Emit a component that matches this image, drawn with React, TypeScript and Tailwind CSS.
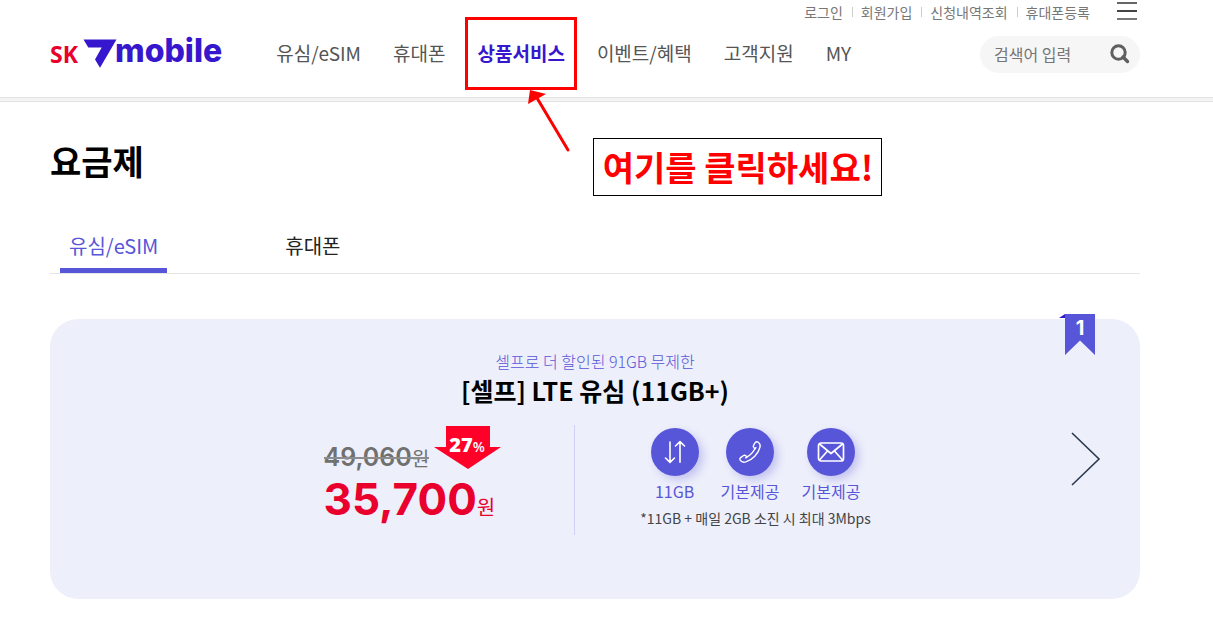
import React from "react";

const utilityLinks = ["로그인", "회원가입", "신청내역조회", "휴대폰등록"];
const menu = ["유심/eSIM", "휴대폰", "상품서비스", "이벤트/혜택", "고객지원", "MY"];

function Logo() {
  return (
    <a href="#home" aria-label="SK 7mobile" className="flex items-center whitespace-nowrap">
      <span className="font-['Open_Sans',sans-serif] text-[23px] leading-8 font-bold text-[#ea002c]">SK</span>
      <svg viewBox="0 0 34 30" className="ml-[5px] h-[30px] w-[34px]" aria-hidden="true">
        <path d="M0.5 0.5H33.5L17 28.8L12 20.5L18.7 8.5H5.3Z" fill="#3617ce" />
      </svg>
      <span className="-ml-0.5 pb-1.5 font-[Inter,sans-serif] text-[32px] leading-8 font-extrabold text-[#3617ce]">mobile</span>
    </a>
  );
}

function ClickGuide() {
  return (
    <>
      <span className="pointer-events-none absolute -inset-x-3 -top-[22px] h-[73px] border-3 border-[#ff0000]" />
      <svg
        viewBox="0 0 44 64"
        className="pointer-events-none absolute top-[50px] left-[50px] h-[64px] w-[44px]"
        aria-hidden="true"
      >
        <path d="M10 9L41 61" stroke="#ff0000" strokeWidth="3" strokeLinecap="round" />
        <path d="M3 1L19 5L1 15Z" fill="#ff0000" />
      </svg>
      <span className="pointer-events-none absolute top-[99px] left-[116px] flex h-[58px] w-[289px] items-center justify-center border border-black bg-white text-[34px] font-bold whitespace-nowrap text-[#ff0000]">
        여기를 클릭하세요!
      </span>
    </>
  );
}

function Header() {
  return (
    <header className="relative z-10 border-b border-[#e3e3e3] pr-[73px] pb-[13px] pl-[50px]">
      <div className="flex h-6 items-center justify-end">
        <ul className="flex items-center text-sm text-[#777]">
          {utilityLinks.map((label, i) => (
            <li key={label} className="flex items-center">
              {i > 0 && <span className="mr-2 ml-[9px] h-[10px] w-px bg-[#ccc]" />}
              <a href="#account">{label}</a>
            </li>
          ))}
        </ul>
        <button type="button" aria-label="전체메뉴" className="mr-[3px] ml-[27px] flex w-5 flex-col gap-1.5 pb-0.5">
          <span className="h-0.5 bg-[#666]" />
          <span className="h-0.5 bg-[#444]" />
          <span className="h-0.5 bg-[#777]" />
        </button>
      </div>
      <div className="flex h-[60px] items-center">
        <Logo />
        <nav className="ml-[54px] pb-0.5">
          <ul className="flex gap-8 text-[19px] leading-[28px] whitespace-nowrap text-[#555]">
            {menu.map((label) =>
              label === "상품서비스" ? (
                <li key={label} className="relative">
                  <a href="#products" className="font-bold text-[#3617ce]">{label}</a>
                  <ClickGuide />
                </li>
              ) : (
                <li key={label}>
                  <a href="#menu">{label}</a>
                </li>
              ),
            )}
          </ul>
        </nav>
        <form className="ml-auto flex h-[37px] w-40 items-center rounded-full bg-[#f6f6f6] pr-[10px] pl-[14px]">
          <input
            type="text"
            aria-label="검색어 입력"
            placeholder="검색어 입력"
            className="w-full min-w-0 flex-1 bg-transparent text-base outline-none placeholder:text-[#757575]"
          />
          <button type="button" aria-label="검색">
            <svg viewBox="0 0 20 20" className="h-5 w-5" fill="none" stroke="#5f5f5f" aria-hidden="true">
              <circle cx="8.5" cy="8.5" r="6.7" strokeWidth="3" />
              <path d="M13 13L17.5 17.5" strokeWidth="3.4" strokeLinecap="round" />
            </svg>
          </button>
        </form>
      </div>
    </header>
  );
}

function DataIcon() {
  return (
    <svg viewBox="0 0 24 24" className="h-6 w-6" fill="none" stroke="#fff" strokeWidth="1.6" strokeLinecap="round" strokeLinejoin="round" aria-hidden="true">
      <path d="M7 2V22M2.5 18L7 22.3L11.5 18M17 22.3V2M12.5 6L17 1.7L21.5 6" />
    </svg>
  );
}

function PhoneIcon() {
  return (
    <svg viewBox="0 0 24 24" className="h-6 w-6" fill="none" stroke="#fff" strokeWidth="1.4" strokeLinejoin="round" strokeLinecap="round" aria-hidden="true">
      <path d="M17.2 2.6C17.9 1.7 19.2 1.5 20.2 2.2C21.8 3.3 22.5 5.2 22 7.2C20.6 13.6 14.2 20 7.8 21.9C5.6 22.5 3.5 22 2.3 20.4C1.6 19.5 1.8 18.3 2.7 17.6L5.2 15.7C6.1 15 7.2 15.1 7.9 15.9L8.8 17C12.2 15.3 15.2 12.2 16.9 8.8L16 7.8C15.2 7 15.1 5.9 15.7 5Z" />
      <path d="M8.8 17C8.5 17.4 8.1 17.7 7.6 17.9M16.9 8.8C17.4 8.5 17.7 8.1 17.9 7.6" />
    </svg>
  );
}

function MailIcon() {
  return (
    <svg viewBox="0 0 28 22" className="h-[22px] w-7" fill="none" stroke="#fff" strokeWidth="1.7" strokeLinejoin="round" aria-hidden="true">
      <rect x="1.5" y="2" width="25" height="18" rx="2.5" />
      <path d="M2.5 3L14 12.5L25.5 3M2.5 19L10.5 10M25.5 19L17.5 10" />
    </svg>
  );
}

const benefits = [
  { id: "data", label: "11GB", icon: <DataIcon /> },
  { id: "voice", label: "기본제공", icon: <PhoneIcon /> },
  { id: "message", label: "기본제공", icon: <MailIcon /> },
];

function PlanCard() {
  return (
    <article className="relative mt-[45px] rounded-[28px] bg-[#edeffb] pt-8 pb-16">
      <div className="absolute -top-[5px] right-[45px] h-[41px] w-9">
        <svg viewBox="0 0 36 41" className="h-[41px] w-9" aria-hidden="true">
          <path d="M0 4L6 0V4Z" fill="#3617ce" />
          <path d="M6 0H36V41L21 26.5L6 41Z" fill="#5856d8" />
        </svg>
        <span className="absolute inset-x-0 top-1 pl-1.5 text-center font-[Inter,sans-serif] text-xl leading-5 font-bold text-white">1</span>
      </div>
      <p className="text-center text-base leading-5 font-light text-[#5856d8]">셀프로 더 할인된 91GB 무제한</p>
      <h2 className="text-center text-[25px] leading-[38px] font-bold text-black">[셀프] LTE 유심 (11GB+)</h2>
      <div className="mt-4 flex h-[110px] justify-center">
        <div className="w-[177px]">
          <div className="flex h-[46px] items-start">
            <del className="relative mt-4 leading-8 whitespace-nowrap text-[#707070] no-underline after:absolute after:inset-x-0 after:top-4 after:h-0.5 after:bg-[#8c8c8c]">
              <span className="font-[Inter,sans-serif] text-[25px] font-semibold">49,060</span>
              <span className="text-[19px]">원</span>
            </del>
            <span className="relative ml-auto h-[44px] w-[67px]">
              <svg viewBox="0 0 67 44" className="h-[44px] w-[67px]" aria-hidden="true">
                <path d="M12 1H56V22H67L34 44L0 22H12Z" fill="#ff0028" />
              </svg>
              <span className="absolute inset-x-0 top-2 text-center font-['Open_Sans',sans-serif] text-xl leading-6 font-extrabold text-white">
                27<span className="text-sm font-semibold">%</span>
              </span>
            </span>
          </div>
          <p className="leading-[56px] whitespace-nowrap text-[#ea002c]">
            <strong className="font-[Inter,sans-serif] text-[44px] font-bold">35,700</strong>
            <span className="text-xl">원</span>
          </p>
        </div>
        <span className="mr-[70px] ml-[73px] w-px bg-[#cfd0f3]" />
        <div className="flex w-[222px] flex-col items-center pt-[3px]">
          <ul className="flex items-start gap-[22px]">
            {benefits.map((b) => (
              <li key={b.id} className="flex flex-col items-center gap-[3px] text-base leading-6 whitespace-nowrap text-[#5856d8]">
                <span className="flex h-12 w-12 items-center justify-center rounded-full bg-[#5856d8] shadow-[4px_4px_8px_#c3c3ef]">
                  {b.icon}
                </span>
                {b.label}
              </li>
            ))}
          </ul>
          <p className="mt-[5px] text-sm leading-5 whitespace-nowrap text-[#444]">*11GB + 매일 2GB 소진 시 최대 3Mbps</p>
        </div>
      </div>
      <button type="button" aria-label="다음 요금제" className="absolute inset-y-0 right-[39px]">
        <svg viewBox="0 0 30 54" className="h-[54px] w-[30px]" fill="none" stroke="#2c3a4e" strokeWidth="1.6" aria-hidden="true">
          <path d="M1 1L28 27L1 53" />
        </svg>
      </button>
    </article>
  );
}

export default function App() {
  return (
    <div className="min-h-screen bg-white font-['Noto_Sans_CJK_KR',sans-serif]">
      <Header />
      <div className="h-1 border-b border-[#e3e3e3] bg-[#f4f4f4]" />
      <main className="pt-[34px] pr-[73px] pb-[27px] pl-[50px]">
        <h1 className="text-[34px] leading-[50px] font-bold text-black">요금제</h1>
        <nav className="mt-[33px] flex border-b border-[#e5e5e5] pl-[10px] text-xl leading-[30px] text-[#222]">
          <a href="#usim" aria-current="page" className="border-b-5 border-[#5856d8] px-[9px] pt-3 pb-[7px] text-[#5856d8]">
            유심/eSIM
          </a>
          <a href="#phone" className="ml-[109px] px-[9px] pt-3 pb-[7px]">휴대폰</a>
        </nav>
        <PlanCard />
      </main>
    </div>
  );
}
